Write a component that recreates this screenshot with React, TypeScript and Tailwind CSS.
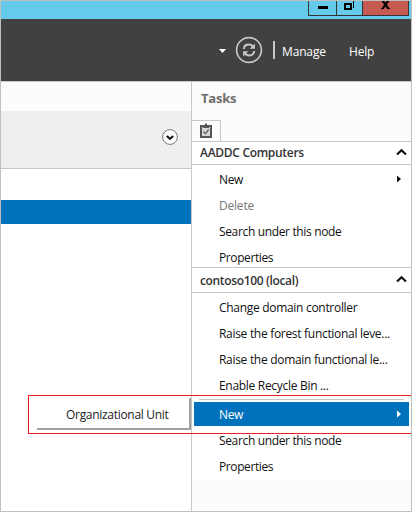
import React from "react";

type ItemProps = { label: string; tracking?: string; disabled?: boolean; submenu?: boolean; selected?: boolean };

function Item({ label, tracking = "tracking-[-0.35px]", disabled, submenu, selected }: ItemProps) {
  const tone = selected ? "bg-[#0072bc] text-white" : disabled ? "text-[#777]" : "text-[#111]";
  return (
    <div className={`mx-[2px] my-px flex h-6 shrink-0 items-center justify-between pl-[25px] pr-2 text-[12px] ${tone}`}>
      <span className={`whitespace-nowrap pt-px ${tracking}`}>{label}</span>
      {submenu && (
        <svg width="4" height="8" viewBox="0 0 4 8" className="-mt-px" fill="currentColor">
          <path d="M0 .5 4 4 0 7.5Z" />
        </svg>
      )}
    </div>
  );
}

function Header({ label, tracking }: { label: string; tracking: string }) {
  return (
    <div className="flex shrink-0 items-center justify-between bg-white pl-2 pr-1 text-[12px] font-semibold text-[#333]">
      <span className={`whitespace-nowrap ${tracking}`}>{label}</span>
      <svg width="11" height="8" viewBox="0 0 11 8" className="-mt-[2px]" fill="none" stroke="#111" strokeWidth="2.2">
        <path d="m1 6.5 4.5-4.3L10 6.5" />
      </svg>
    </div>
  );
}

export default function App() {
  return (
    <div className="relative flex h-[512px] w-[412px] flex-col overflow-hidden border border-[#bfbfbf] bg-white font-['Open_Sans','Noto_Sans',sans-serif] leading-[16px]">
      <div className="flex h-[18px] shrink-0 justify-end bg-[#66caea] pr-[2px]">
        <div className="flex h-[15px] border-x border-b border-[#333]">
          <div className="flex w-[28px] justify-center border-r border-[#333]">
            <div className="mt-[5px] h-[3px] w-[10px] bg-black" />
          </div>
          <div className="flex w-[26px] justify-center border-r border-[#333]">
            <svg width="13" height="10" viewBox="0 0 13 10" fill="none" stroke="#000">
              <path d="M2 3h6v5H2z" strokeWidth="2" />
              <path d="M10.5 0v7" />
            </svg>
          </div>
          <div className="flex w-[45px] justify-center bg-[#c45a50]">
            <svg width="11" height="9" viewBox="0 0 11 9" fill="none" stroke="#000" strokeWidth="2.2">
              <path d="m2.2-1 6 8.4M8.8-1l-6 8.4" />
              <path d="M1 7.5h3M7 7.5h3" strokeWidth="1" />
            </svg>
          </div>
        </div>
      </div>

      <div className="flex h-[62px] shrink-0 items-center bg-[#414141] pl-[218px] text-[12px] text-white">
        <svg width="7" height="4" viewBox="0 0 7 4" className="mt-[2px]" fill="#fff"><path d="M0 0h7L3.5 4Z" /></svg>
        <svg className="ml-[9px]" width="28" height="28" viewBox="0 0 28 28" fill="none" stroke="#c9c9c9">
          <circle cx="14" cy="14" r="12.4" strokeWidth="1.6" />
          <path d="M8.8 13c.3-3.3 2.2-4.5 5-4.5 1.8 0 3 .5 4 1.8M19.2 15c-.3 3.3-2.2 4.5-5 4.5-1.8 0-3-.5-4-1.8" strokeWidth="2" />
          <path d="M19.9 7.5v5.2h-5.2ZM8.1 20.5v-5.2h5.2Z" fill="#c9c9c9" stroke="none" />
        </svg>
        <div className="ml-[10px] h-[18px] w-[2px] bg-[#c9c9c9]" />
        <span className="ml-[7px] w-[67px] pt-[3px] tracking-[-0.15px]">Manage</span>
        <span className="pt-[3px] tracking-[-0.2px]">Help</span>
      </div>

      <div className="flex min-h-0 flex-1 border-t border-[#c8c8c8]">
        <div className="flex w-[191px] shrink-0 flex-col border-r border-[#c8c8c8]">
          <div className="h-[29px] shrink-0 bg-[#fcfcfc]" />
          <div className="flex h-[58px] shrink-0 items-center justify-end border-b border-[#c8c8c8] bg-[#efefef] pr-[13px]">
            <svg width="16" height="16" viewBox="0 0 16 16" className="-mt-[5px]" fill="none">
              <circle cx="8" cy="8" r="7.4" fill="#fff" stroke="#777" />
              <path d="M4.8 7 8 9.8 11.2 7" stroke="#111" strokeWidth="2" />
            </svg>
          </div>
          <div className="h-[31px] shrink-0" />
          <div className="h-6 shrink-0 bg-[#0072bc]" />
        </div>

        <div className="flex min-w-0 flex-1 flex-col bg-[#fcfcfc]">
          <div className="flex h-[38px] shrink-0 items-center pb-[6px] pl-[9px] text-[13px] font-bold tracking-[-0.2px] text-[#6d6d6d]">Tasks</div>
          <div className="flex h-[22px] shrink-0 border-b border-[#c8c8c8]">
            <div className="flex w-[29px] items-center border-r border-t border-[#c8c8c8] pb-px pl-2">
              <svg width="12" height="15" viewBox="0 0 12 15" fill="none">
                <path d="M1 3h10v11H1z" fill="#d6d6d6" stroke="#555" strokeWidth="2" />
                <path d="M3 5V2h2V.5h2V2h2v3Z" fill="#555" />
                <path d="m3.5 8.5 2 2.2 3.2-4.2" stroke="#666" strokeWidth="1.3" />
              </svg>
            </div>
          </div>
          <div className="grid h-[23px] shrink-0 border-b border-[#c8c8c8]">
            <Header label="AADDC Computers" tracking="tracking-[-0.3px]" />
          </div>
          <div className="flex h-[102px] shrink-0 flex-col overflow-hidden bg-white pt-px">
            <Item label="New" submenu />
            <Item label="Delete" tracking="tracking-[-0.2px]" disabled />
            <Item label="Search under this node" />
            <Item label="Properties" tracking="tracking-[-0.4px]" />
          </div>
          <div className="grid h-[26px] shrink-0 border-y border-[#c8c8c8]">
            <Header label="contoso100 (local)" tracking="tracking-[-0.35px] pt-[2px]" />
          </div>
          <div className="flex h-[187px] shrink-0 flex-col bg-white pt-px">
            <Item label="Change domain controller" tracking="tracking-[-0.3px]" />
            <Item label="Raise the forest functional leve..." tracking="tracking-[-0.3px]" />
            <Item label="Raise the domain functional le..." tracking="tracking-[-0.3px]" />
            <Item label="Enable Recycle Bin ..." tracking="tracking-[-0.3px]" />
            <div className="my-px ml-[7px] h-px w-[205px] shrink-0 bg-[#c8c8c8]" />
            <Item label="New" submenu selected />
            <Item label="Search under this node" />
            <Item label="Properties" tracking="tracking-[-0.4px]" />
          </div>
        </div>
      </div>

      <div className="absolute left-[36px] top-[397px] flex h-[32px] w-[154px] items-center border-b-2 border-r-2 border-[#a0a0a0] bg-white pl-[29px] pt-[3px] text-[12px] text-[#222]">
        <span className="whitespace-nowrap tracking-[-0.3px]">Organizational Unit</span>
      </div>
      <div className="absolute left-[27px] top-[394px] h-[39px] w-[383px] border-y border-l border-[#ed1c24]" />
    </div>
  );
}
